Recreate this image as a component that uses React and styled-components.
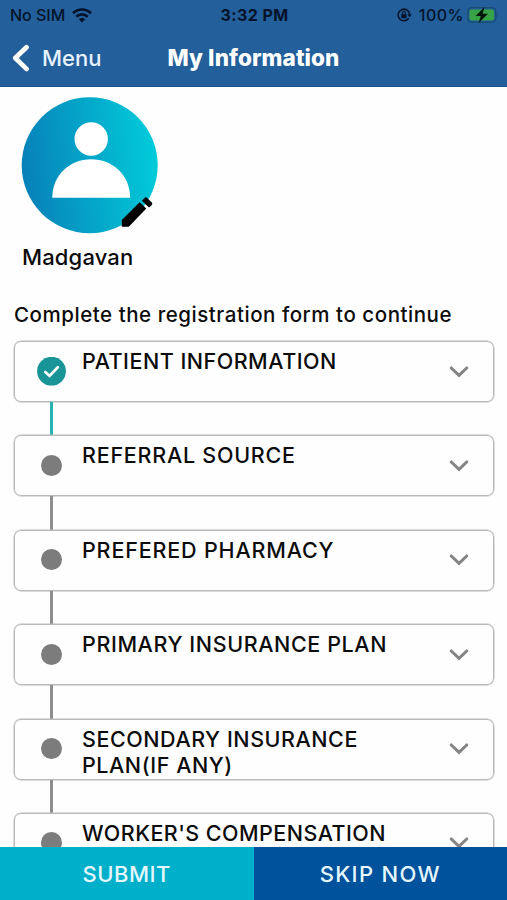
import React from "react";
import styled, { createGlobalStyle } from 'styled-components'

const colors = {
    header: '#235f9b',
    status: '#04132a',
    teal: '#199598',
    line: '#27b3b3',
    grey: '#7c7c7c',
    border: '#bababa',
    submit: '#00b0ca',
    skip: '#00529c',
}

const GlobalStyle = createGlobalStyle`
    * {
        box-sizing: border-box;
    }
    body {
        margin: 0;
        background: #fefefe;
        color: #0c0c0c;
        font-family: Inter, "Liberation Sans", sans-serif;
    }
    svg {
        display: block;
        flex: none;
    }
`

const Screen = styled.div`
    display: flex;
    flex-direction: column;
    height: 900px;
    overflow: hidden;
`

const Header = styled.header`
    flex: none;
    height: 87px;
    background: ${colors.header};
    border-bottom: 1px solid #1e528a;
`

const StatusBar = styled.div`
    display: grid;
    grid-template-columns: 1fr auto 1fr;
    align-items: center;
    height: 30px;
    padding: 0 8px 0 10px;
    color: ${colors.status};
    font-size: 16px;
    font-weight: 500;
`

const StatusGroup = styled.div`
    display: flex;
    align-items: center;
    justify-content: ${(props) => props.$end ? 'flex-end' : 'flex-start'};
    letter-spacing: ${(props) => props.$end ? '0.5px' : '0'};
`

const StatusText = styled.span`
    margin-left: 7px;
`

const WifiSvg = styled.svg`
    margin-left: 7px;
`

const BatterySvg = styled.svg`
    margin-left: 3px;
`

const Clock = styled.span`
    font-weight: 700;
    letter-spacing: 0.4px;
`

const NavBar = styled.div`
    display: grid;
    grid-template-columns: 1fr auto 1fr;
    align-items: center;
    height: 55px;
    padding: 0 12px;
    color: white;
`

const BackLink = styled.div`
    display: flex;
    align-items: center;
    gap: 12px;
    font-size: 22px;
    font-weight: 500;
    color: #e6f2ff;
`

const Title = styled.h1`
    margin: 0;
    font-size: 22.5px;
    font-weight: 800;
    letter-spacing: 0.1px;
`

const Content = styled.main`
    flex: 1;
    min-height: 0;
    overflow: hidden;
    padding: 10px 13px 0 14px;
`

const Avatar = styled.div`
    position: relative;
    width: 137px;
    height: 137px;
    margin-left: 7px;
`

const EditIcon = styled.svg`
    position: absolute;
    left: 100px;
    top: 99px;
`

const Name = styled.div`
    margin: 8px 0 0 8px;
    font-size: 22px;
    line-height: 30px;
    font-weight: 500;
    letter-spacing: 0.15px;
`

const Hint = styled.p`
    margin: 30px 0 13px;
    font-size: 20.5px;
    line-height: 26px;
    font-weight: 500;
    white-space: nowrap;
    letter-spacing: 0.54px;
`

const Step = styled.div`
    display: flex;
    height: 61px;
    border: 1px solid ${colors.border};
    border-radius: 7px;
    box-shadow: 0 0 0 0.5px ${colors.border};
`

const Marker = styled.div`
    display: flex;
    align-items: center;
    justify-content: center;
    width: 73px;
    padding-bottom: 1px;
`

const Dot = styled.span`
    width: 21px;
    height: 21px;
    border-radius: 50%;
    background: ${colors.grey};
`

const StepTitle = styled.div`
    flex: 1;
    margin-left: -6px;
    padding-top: 6px;
    font-size: 21.5px;
    line-height: 26px;
    font-weight: 500;
    white-space: pre-line;
    letter-spacing: ${(props) => props.$spacing}px;
`

const Arrow = styled.div`
    display: flex;
    align-items: center;
    padding-right: 24px;
`

const Connector = styled.div`
    width: 2.5px;
    height: 33.4px;
    margin-left: 36px;
    background: ${(props) => props.$done ? colors.line : '#8e8e8e'};
`

const Footer = styled.footer`
    display: flex;
    flex: none;
    height: 53px;
`

const FooterButton = styled.button`
    flex: 1;
    border: 0;
    padding: 0;
    font-family: inherit;
    font-size: 22px;
    font-weight: 500;
    letter-spacing: ${(props) => props.$spacing}px;
    color: #e4f7ff;
    background: ${(props) => props.$color};
`

const steps = [
    { title: 'PATIENT INFORMATION', spacing: 0.5, done: true },
    { title: 'REFERRAL SOURCE', spacing: 0.75 },
    { title: 'PREFERED PHARMACY', spacing: 0.83 },
    { title: 'PRIMARY INSURANCE PLAN', spacing: 0.6 },
    { title: 'SECONDARY INSURANCE\nPLAN(IF ANY)', spacing: 0.55 },
    { title: "WORKER'S COMPENSATION", spacing: 0.45 },
]

function WifiIcon() {
    return (
        <WifiSvg width="20" height="15" viewBox="0 0 20 15" fill="none" stroke={colors.status} strokeWidth="2.6">
            <path d="M1 5.3C6.2.3 13.8.3 19 5.3" />
            <path d="M4.2 8.8c3.4-3.2 8.2-3.2 11.6 0" />
            <path d="M6.8 11.2c1.9-1.6 4.5-1.6 6.4 0L10 14.6z" fill={colors.status} stroke="none" />
        </WifiSvg>
    )
}

function LockIcon() {
    return (
        <svg width="15" height="14" viewBox="0 0 15 14" fill="none" stroke={colors.status} strokeWidth="1.6">
            <path d="M11.7 10.3A5.8 5.8 0 1 1 12.7 6.3" />
            <path d="M10.3 6.2h4.6l-2.3 3z" fill={colors.status} stroke="none" />
            <rect x="4.3" y="6.3" width="5.2" height="4" rx=".6" fill={colors.status} stroke="none" />
            <path d="M5.4 6.5V5a1.5 1.5 0 0 1 3 0v1.5" strokeWidth="1.1" />
        </svg>
    )
}

function BatteryIcon() {
    return (
        <BatterySvg width="32" height="19" viewBox="0 0 32 19">
            <rect x=".8" y="1.6" width="28" height="14.6" rx="4" fill="none" stroke="#174b72" strokeWidth="1.3" />
            <rect x="2.5" y="3.4" width="24.6" height="11" rx="2.3" fill="#38a246" />
            <path d="M30.3 6.6c1.3.6 1.3 4 0 4.6z" fill="#174b72" />
            <path d="M17.5 1 8.6 10h5.2l-2.2 7 9.4-9.2h-5.4z" fill="#04150c" />
        </BatterySvg>
    )
}

function AvatarIcon() {
    return (
        <svg width="137" height="137" viewBox="0 0 137 137">
            <defs>
                <linearGradient id="avatar" x1="0" y1=".56" x2="1" y2=".44">
                    <stop offset="0" stopColor="#0780b8" />
                    <stop offset="1" stopColor="#02ccda" />
                </linearGradient>
            </defs>
            <circle cx="68.7" cy="68.3" r="68" fill="url(#avatar)" />
            <circle cx="70.2" cy="42" r="16.7" fill="#fff" />
            <path d="M31.3 100.8C31.3 78 49 62.3 70.2 62.3S109.1 78 109.1 100.8z" fill="#fff" />
        </svg>
    )
}

export default function App() {
    return (
        <Screen>
            <GlobalStyle />
            <Header>
                <StatusBar>
                    <StatusGroup>No SIM <WifiIcon /></StatusGroup>
                    <Clock>3:32 PM</Clock>
                    <StatusGroup $end>
                        <LockIcon />
                        <StatusText>100%</StatusText>
                        <BatteryIcon />
                    </StatusGroup>
                </StatusBar>
                <NavBar>
                    <BackLink>
                        <svg width="18" height="28" viewBox="0 0 18 28" fill="none" stroke="#fff" strokeWidth="4.8" strokeLinecap="round" strokeLinejoin="round">
                            <path d="M14.5 3.3 3.3 14l11.2 10.9" />
                        </svg>
                        Menu
                    </BackLink>
                    <Title>My Information</Title>
                </NavBar>
            </Header>

            <Content>
                <Avatar>
                    <AvatarIcon />
                    <EditIcon width="32" height="33" viewBox="0 0 32 33">
                        <path d="M.8 24 18.7 6.2l6.6 6.4L7.8 30.8H.8z" fill="#000" />
                        <path d="M20.8 4.8 23.6 2q1.3-1.3 2.6 0l4.6 4.6q1.1 1.2 0 2.4L28 11.6z" fill="#000" />
                    </EditIcon>
                </Avatar>
                <Name>Madgavan</Name>
                <Hint>Complete the registration form to continue</Hint>

                {steps.map((step, index) => (
                    <React.Fragment key={step.title}>
                        {index > 0 && <Connector $done={steps[index - 1].done} />}
                        <Step>
                            <Marker>
                                {step.done ? (
                                    <svg width="29" height="29" viewBox="0 0 29 29">
                                        <circle cx="14.5" cy="14.2" r="14.4" fill={colors.teal} />
                                        <path d="M8.3 14.9 12.6 18.9 20.8 10.3" fill="none" stroke="#fff" strokeWidth="2.7" strokeLinecap="round" />
                                    </svg>
                                ) : <Dot />}
                            </Marker>
                            <StepTitle $spacing={step.spacing}>{step.title}</StepTitle>
                            <Arrow>
                                <svg width="20" height="12" viewBox="0 0 20 12" fill="none" stroke="#858585" strokeWidth="3.1" strokeLinecap="round">
                                    <path d="M2.3 2 10 9.4 17.7 2" />
                                </svg>
                            </Arrow>
                        </Step>
                    </React.Fragment>
                ))}
            </Content>

            <Footer>
                <FooterButton $color={colors.submit} $spacing={0.5}>SUBMIT</FooterButton>
                <FooterButton $color={colors.skip} $spacing={1.3}>SKIP NOW</FooterButton>
            </Footer>
        </Screen>
    )
}
